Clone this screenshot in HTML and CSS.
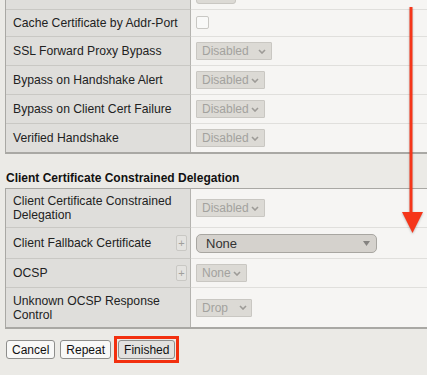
FILE: index.html
```html
<!DOCTYPE html>
<html lang="en">
<head>
    <meta charset="UTF-8">
    <meta name="viewport" content="width=device-width, initial-scale=1.0">
    <title>Client SSL Profile</title>
    <link rel="stylesheet" href="styles.css">
</head>
<body>
    <div class="page">
        <div class="grid grid-top">
            <div class="row">
                <div class="label"></div>
                <div class="value"><span class="select stub"></span></div>
            </div>
            <div class="row row-short">
                <div class="label">Cache Certificate by Addr-Port</div>
                <div class="value"><span class="checkbox"></span></div>
            </div>
            <div class="row">
                <div class="label">SSL Forward Proxy Bypass</div>
                <div class="value"><span class="select w76">Disabled <svg class="chev" viewBox="0 0 8 5"><path d="M1 1l3 3 3-3"/></svg></span></div>
            </div>
            <div class="row">
                <div class="label">Bypass on Handshake Alert</div>
                <div class="value"><span class="select w69">Disabled <svg class="chev" viewBox="0 0 8 5"><path d="M1 1l3 3 3-3"/></svg></span></div>
            </div>
            <div class="row">
                <div class="label">Bypass on Client Cert Failure</div>
                <div class="value"><span class="select w69">Disabled <svg class="chev" viewBox="0 0 8 5"><path d="M1 1l3 3 3-3"/></svg></span></div>
            </div>
            <div class="row last">
                <div class="label">Verified Handshake</div>
                <div class="value"><span class="select w69">Disabled <svg class="chev" viewBox="0 0 8 5"><path d="M1 1l3 3 3-3"/></svg></span></div>
            </div>
        </div>

        <h2 class="section-title">Client Certificate Constrained Delegation</h2>

        <div class="grid grid-second">
            <div class="row row-tall">
                <div class="label">Client Certificate Constrained Delegation</div>
                <div class="value"><span class="select w69">Disabled <svg class="chev" viewBox="0 0 8 5"><path d="M1 1l3 3 3-3"/></svg></span></div>
            </div>
            <div class="row row-mid">
                <div class="label">Client Fallback Certificate <span class="plus">+</span></div>
                <div class="value"><span class="select-big">None <svg class="tri" viewBox="0 0 7 5"><path d="M0 0h7l-3.5 5z"/></svg></span></div>
            </div>
            <div class="row">
                <div class="label">OCSP <span class="plus">+</span></div>
                <div class="value"><span class="select w51">None <svg class="chev" viewBox="0 0 8 5"><path d="M1 1l3 3 3-3"/></svg></span></div>
            </div>
            <div class="row row-tall last">
                <div class="label">Unknown OCSP Response Control</div>
                <div class="value"><span class="select w56">Drop <svg class="chev" viewBox="0 0 8 5"><path d="M1 1l3 3 3-3"/></svg></span></div>
            </div>
        </div>

        <div class="actions">
            <button class="btn">Cancel</button>
            <button class="btn">Repeat</button>
            <span class="highlight"><button class="btn btn-main">Finished</button></span>
        </div>

        <!-- annotation arrow drawn over the page -->
        <svg class="arrow" viewBox="0 0 427 375">
            <line x1="411" y1="7" x2="411" y2="216" />
            <path d="M402 212h21l-10.5 21z" />
        </svg>
    </div>
</body>
</html>
```

FILE: styles.css
```css
body {
    margin: 0;
    background-color: #ebeae6;
    font-family: "Liberation Sans", Arial, sans-serif;
    font-size: 12px;
    color: #222;
}

.page {
    position: relative;
    height: 375px;
    overflow: hidden;
}

.grid {
    margin-left: 5px;
    border-left: 1px solid #a9a8a4;
    border-bottom: 2px solid #a9a8a4;
}

.grid-top {
    margin-top: -19px;
}

.grid-second {
    border-top: 1px solid #a9a8a4;
}

.row {
    display: grid;
    grid-template-columns: 185px 1fr;
    height: 29px;
}

.row-short {
    height: 27px;
}

.row-mid {
    height: 31px;
}

.row-tall {
    height: 39px;
}

.row.last {
    height: 28px;
}

.row-tall.last {
    height: 39px;
}

.label {
    background-color: #dfdedb;
    border-right: 1px solid #b4b3af;
    border-bottom: 1px solid #c9c8c4;
    padding: 0 3px 0 7px;
    display: flex;
    align-items: center;
    justify-content: space-between;
    line-height: 14px;
    font-size: 12.2px;
}

.value {
    background-color: #f6f5f3;
    border-bottom: 1px solid #e0dfdc;
    padding-left: 5px;
    display: flex;
    align-items: center;
}

.row.last .label,
.row.last .value {
    border-bottom: none;
}

.select {
    box-sizing: border-box;
    height: 18px;
    display: flex;
    align-items: center;
    justify-content: space-between;
    padding: 0 5px;
    background-color: #dcdad5;
    border: 1px solid #c9c7c2;
    border-radius: 1px;
    color: #a3a29e;
}

.stub {
    width: 40px;
    border-radius: 3px;
}

.w76 { width: 76px; }
.w69 { width: 69px; }
.w56 { width: 56px; padding-right: 4px; }
.w51 { width: 51px; }

.chev {
    width: 8px;
    height: 5px;
    fill: none;
    stroke: #9d9b97;
    stroke-width: 1.6;
}

.checkbox {
    box-sizing: border-box;
    width: 13px;
    height: 13px;
    margin-bottom: 1px;
    background-color: #f9f9f8;
    border: 1px solid #c9c8c4;
    border-radius: 2px;
}

.select-big {
    box-sizing: border-box;
    width: 181px;
    height: 19px;
    display: flex;
    align-items: center;
    justify-content: space-between;
    padding: 0 6px 0 9px;
    background-color: #d5d2cd;
    border: 1px solid #a8a6a1;
    border-radius: 5px;
    color: #333;
    font-size: 13px;
}

.tri {
    width: 7px;
    height: 5px;
    fill: #858380;
}

.plus {
    box-sizing: border-box;
    width: 11px;
    height: 16px;
    display: flex;
    align-items: center;
    justify-content: center;
    background-color: #e4e3e0;
    border: 1px solid #c9c8c4;
    border-radius: 2px;
    color: #a09f9b;
    font-size: 11px;
}

.section-title {
    margin: 0;
    padding: 17px 0 3px 6px;
    font-size: 12px;
    line-height: 14px;
    font-weight: bold;
    color: #111;
}

.actions {
    display: flex;
    align-items: center;
    padding-left: 6px;
    margin-top: 7px;
}

.btn {
    height: 19px;
    padding: 0 5px;
    margin-right: 5px;
    font-family: "Liberation Sans", Arial, sans-serif;
    font-size: 12px;
    color: #111;
    background-color: #f8f8f7;
    border: 1px solid #8e8e8c;
    border-radius: 3px;
}

.btn + .btn {
    margin-right: 3px;
}

.highlight {
    display: inline-flex;
    padding: 1px;
    border: 3px solid #f2300f;
}

.btn-main {
    margin-right: 0;
    background-color: #e2e1df;
}

.arrow {
    position: absolute;
    top: 0;
    left: 0;
    width: 427px;
    height: 375px;
    pointer-events: none;
    filter: drop-shadow(0 1px 1px rgba(0, 0, 0, 0.25));
}

.arrow line {
    stroke: #f5361a;
    stroke-width: 3;
}

.arrow path {
    fill: #f5361a;
}
```
